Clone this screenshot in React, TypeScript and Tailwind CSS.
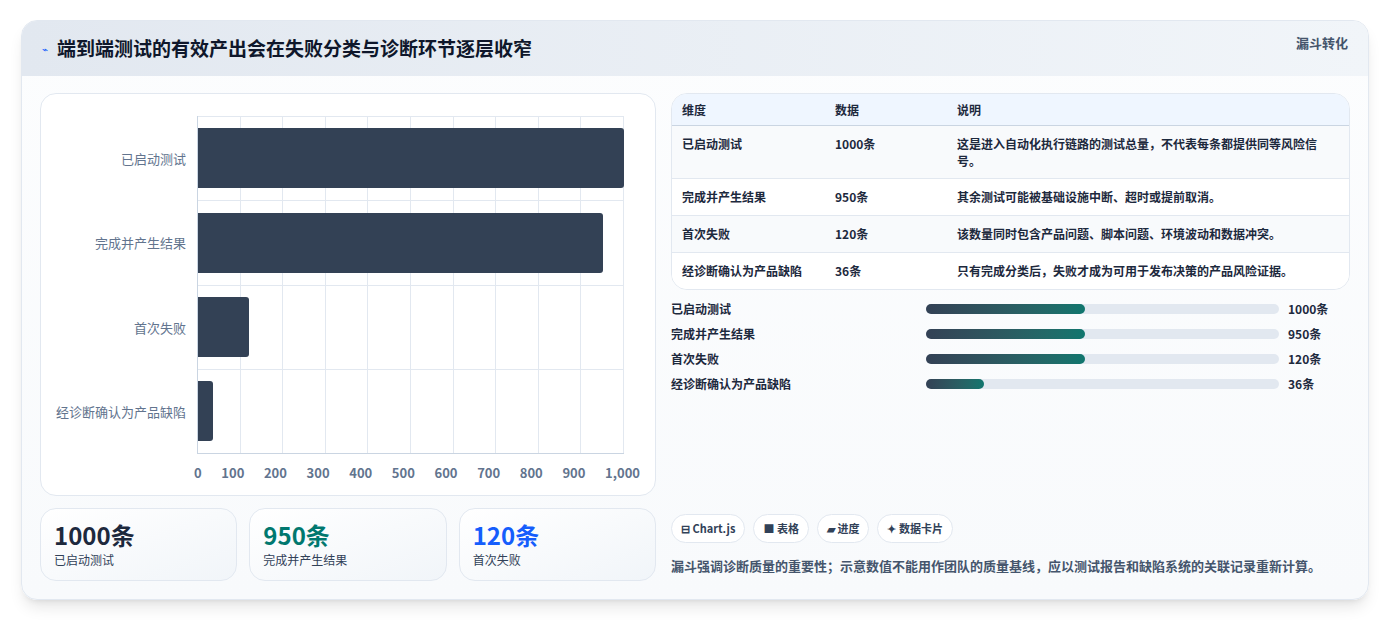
const F = { fontFamily: '"Noto Sans CJK SC", "Noto Sans", sans-serif' }

const rows = [
  { name: "已启动测试", v: 1000, pct: 100, bar: 45, note: "这是进入自动化执行链路的测试总量，不代表每条都提供同等风险信号。" },
  { name: "完成并产生结果", v: 950, pct: 95, bar: 45, note: "其余测试可能被基础设施中断、超时或提前取消。" },
  { name: "首次失败", v: 120, pct: 12, bar: 45, note: "该数量同时包含产品问题、脚本问题、环境波动和数据冲突。" },
  { name: "经诊断确认为产品缺陷", v: 36, pct: 3.6, bar: 16.5, note: "只有完成分类后，失败才成为可用于发布决策的产品风险证据。" },
]

const ticks = ["0", "100", "200", "300", "400", "500", "600", "700", "800", "900", "1,000"]

function Chart() {
  return (
    <div className="h-[403px] rounded-2xl border border-slate-200 bg-white pl-[14px] pr-[31px] pt-[22px]">
      <div className="flex">
        <div className="flex w-[142px] flex-col">
          {rows.map((r) => (
            <div key={r.name} className="flex h-[84.5px] items-center justify-end pr-[11px] text-[13px] text-slate-500">
              {r.name}
            </div>
          ))}
        </div>
        <div className="relative h-[338px] flex-1 border-b border-l border-slate-300">
          <div className="absolute inset-0 flex">
            {ticks.slice(1).map((t) => (
              <div key={t} className="flex-1 border-r border-t border-slate-200" />
            ))}
          </div>
          <div className="absolute inset-0 flex flex-col">
            {rows.map((r, i) => (
              <div key={r.name} className={"flex h-[84.5px] items-center " + (i ? "border-t border-slate-200" : "")}>
                <div className="h-[60px] rounded-r-[3px] bg-[#334155]" style={{ width: r.pct + "%" }} />
              </div>
            ))}
          </div>
        </div>
      </div>
      <div className="ml-[142px] flex justify-between pt-[9px] text-[13px] font-semibold text-slate-500">
        {ticks.map((t, i) => (
          <span key={t} className={i === 0 ? "-ml-[3px]" : i === 10 ? "-mr-[16px]" : ""}>{t}</span>
        ))}
      </div>
    </div>
  )
}

export default function App() {
  return (
    <div className="min-h-[621px] bg-white pt-[20px] pl-[21px] pr-[21px]" style={F}>
      <div className="h-[580px] overflow-hidden rounded-2xl border border-slate-200 bg-gradient-to-b from-[#fcfdfe] to-[#f8fafc] shadow-lg">
        <div className="flex h-[55px] items-center justify-between bg-gradient-to-r from-[#e2e8f0] to-[#f1f5f9] pl-[20px] pr-[20px]">
          <div className="flex items-center gap-[9px]">
            <span className="text-[10px] text-blue-600">⌁</span>
            <h1 className="text-[19px] font-bold text-slate-900">端到端测试的有效产出会在失败分类与诊断环节逐层收窄</h1>
          </div>
          <span className="-mt-[12px] text-[13px] font-semibold text-slate-600">漏斗转化</span>
        </div>
        <div className="flex gap-[15px] px-[18px] pt-[17px]">
          <div className="w-[616px]">
            <Chart />
            <div className="mt-[12px] grid grid-cols-3 gap-[12px]">
              {[
                ["1000条", "已启动测试", "text-slate-800"],
                ["950条", "完成并产生结果", "text-teal-700"],
                ["120条", "首次失败", "text-blue-600"],
              ].map(([v, l, c]) => (
                <div key={l} className="h-[73px] rounded-2xl border border-slate-200 bg-gradient-to-br from-white to-[#f1f5f9] px-[13px] pt-[10px]">
                  <div className={"text-[24px] font-bold leading-[32px] " + c}>{v}</div>
                  <div className="text-[12px] text-slate-700">{l}</div>
                </div>
              ))}
            </div>
          </div>
          <div className="flex flex-1 flex-col">
            <div className="overflow-hidden rounded-2xl border border-slate-200 bg-white text-[12px] text-slate-800">
              <div className="flex h-[32px] items-center border-b border-slate-300 bg-[#eff6ff] font-bold text-slate-800">
                <div className="w-[163px] pl-[10px]">维度</div>
                <div className="w-[122px]">数据</div>
                <div className="flex-1">说明</div>
              </div>
              {rows.map((r, i) => (
                <div key={r.name} className={"flex py-[9px] " + (i ? "border-t border-slate-200 " : "") + (i % 2 ? "bg-white" : "bg-slate-50")}>
                  <div className="w-[163px] pl-[10px] font-semibold">{r.name}</div>
                  <div className="w-[122px] font-semibold">{r.v}条</div>
                  <div className="flex-1 pr-[14px] font-semibold leading-[17px]">{r.note}</div>
                </div>
              ))}
            </div>
            <div className="mt-[10px] flex flex-col gap-[8px]">
              {rows.map((r) => (
                <div key={r.name} className="flex h-[17px] items-center text-[12px] font-semibold text-slate-800">
                  <div className="w-[255px]">{r.name}</div>
                  <div className="h-[10px] w-[353px] rounded-full bg-slate-200">
                    <div className="h-full rounded-full bg-gradient-to-r from-[#334155] to-[#0f766e]" style={{ width: r.bar + "%" }} />
                  </div>
                  <div className="pl-[9px] font-bold">{r.v}条</div>
                </div>
              ))}
            </div>
            <div className="mt-auto mb-[6px]">
              <div className="flex gap-[8px] text-[11px] font-semibold text-slate-700">
                {["⊟ Chart.js", "■ 表格", "▰ 进度", "✦ 数据卡片"].map((t) => (
                  <span key={t} className="rounded-full border border-slate-200 bg-white px-[9px] py-[5px]">{t}</span>
                ))}
              </div>
              <p className="mt-[13px] text-[13px] font-semibold text-slate-600">漏斗强调诊断质量的重要性；示意数值不能用作团队的质量基线，应以测试报告和缺陷系统的关联记录重新计算。</p>
            </div>
          </div>
        </div>
      </div>
    </div>
  )
}
